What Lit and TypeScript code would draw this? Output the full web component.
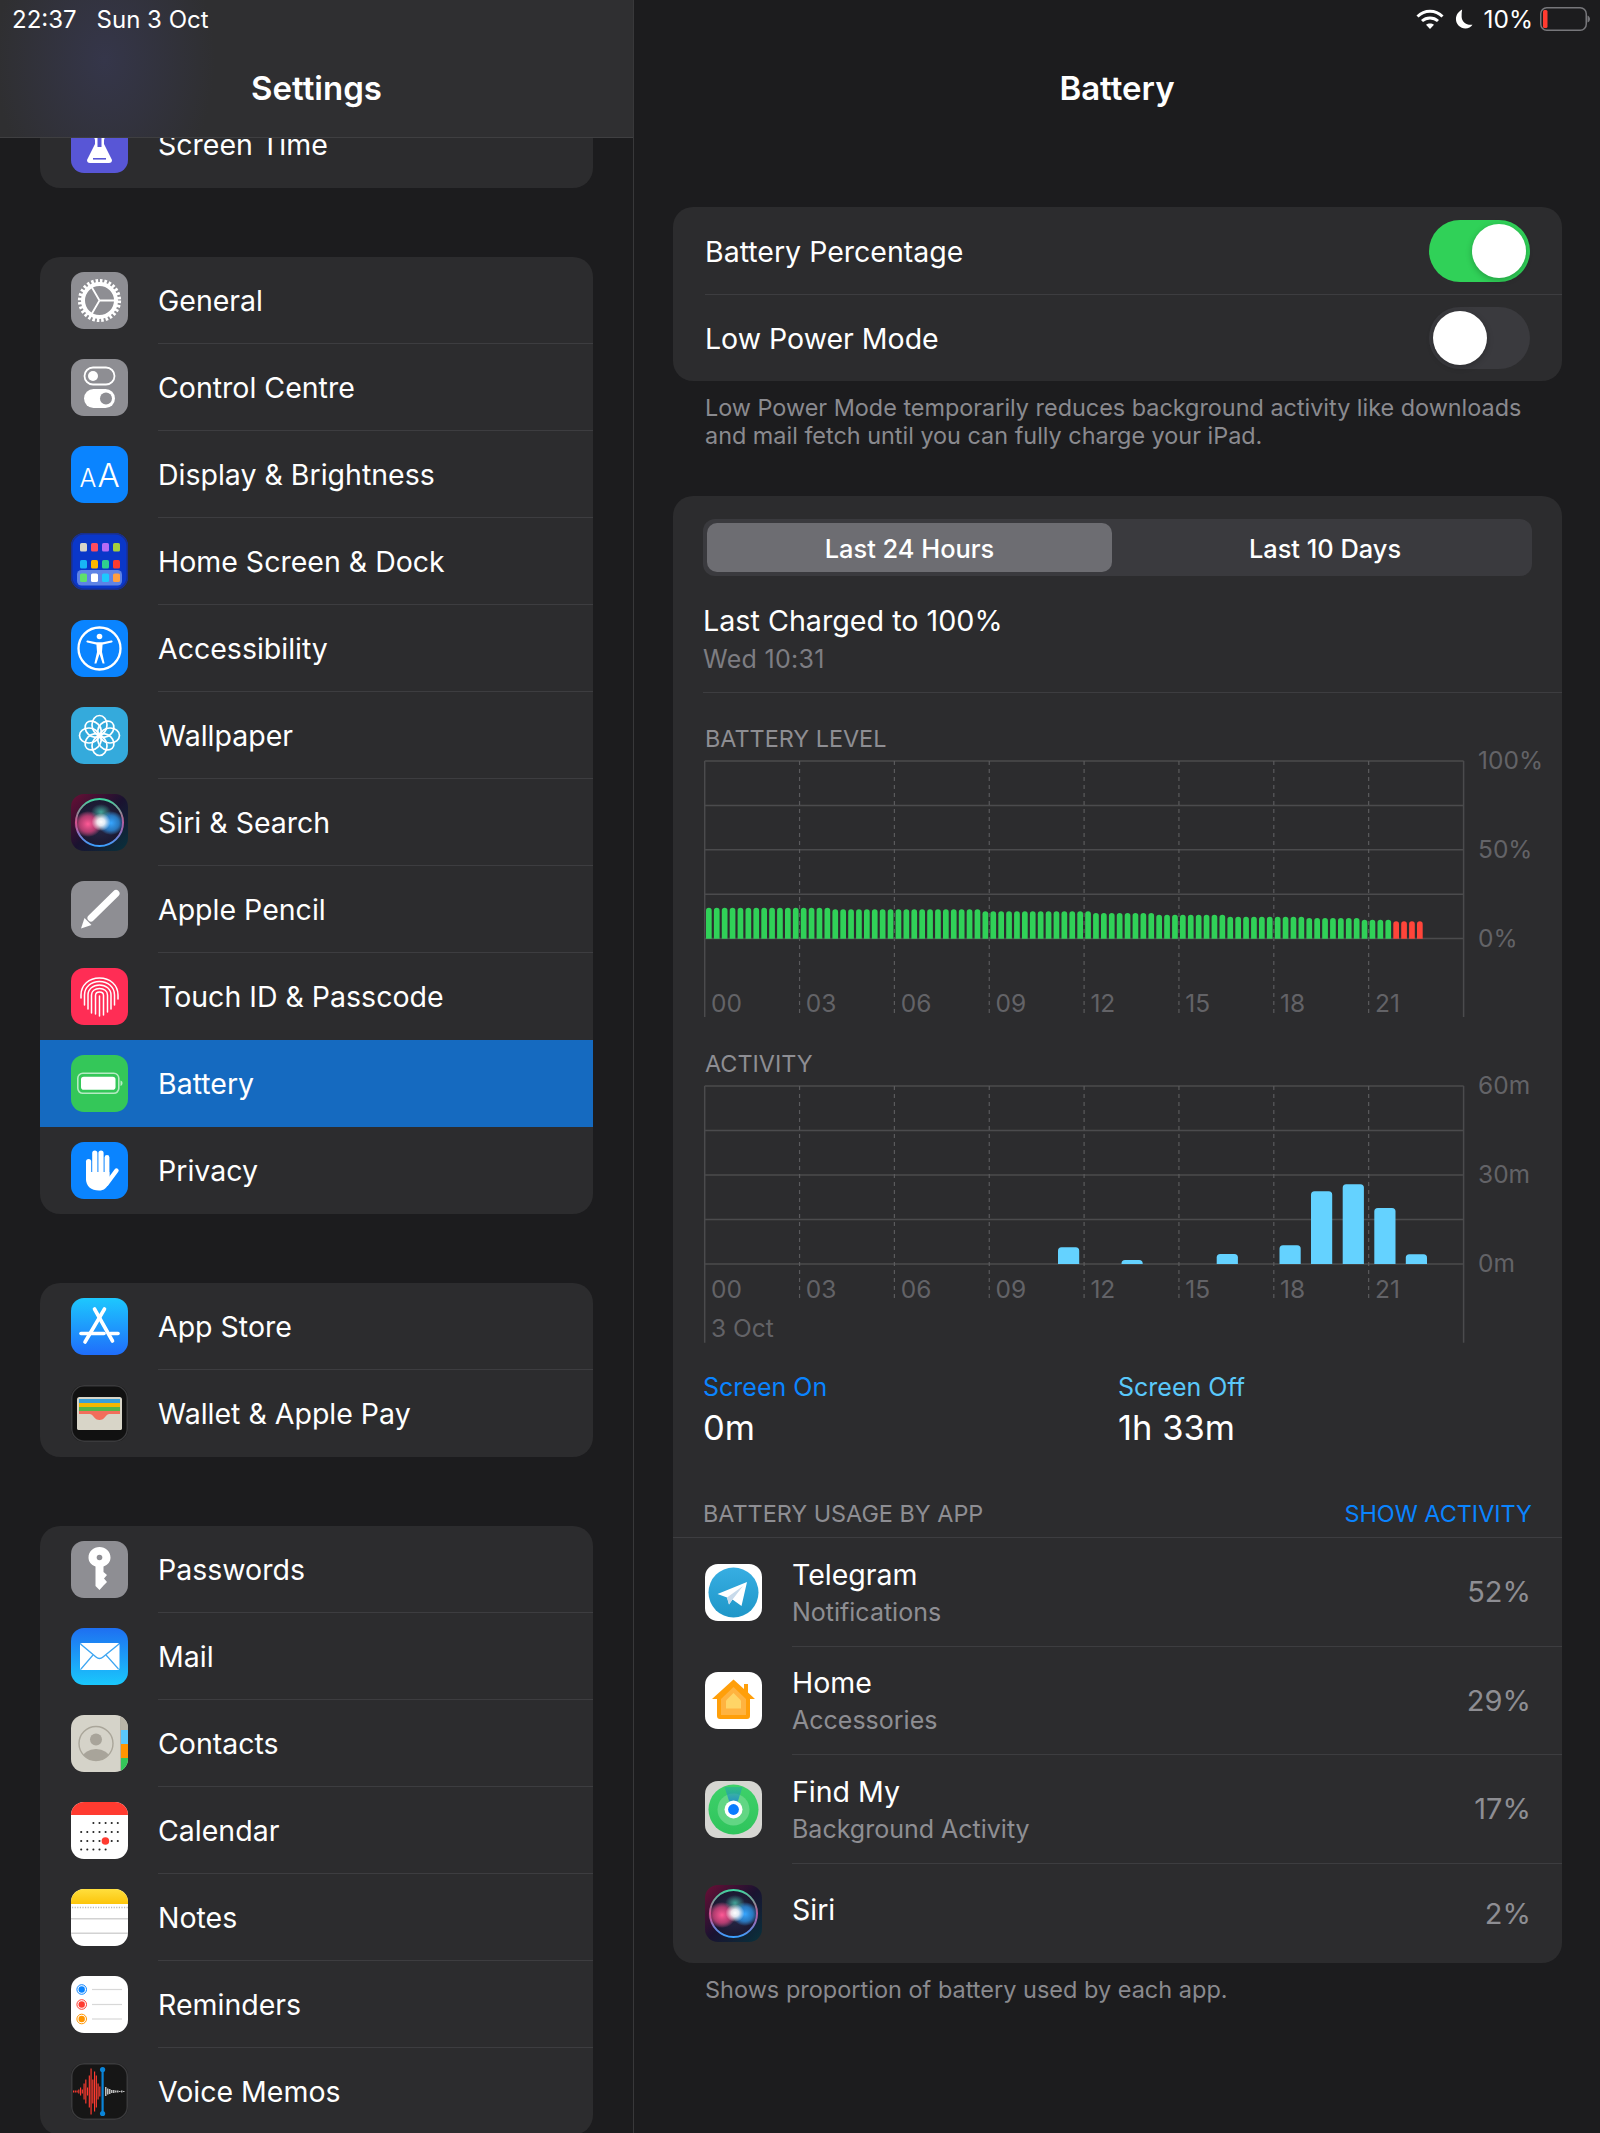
import { LitElement, html, css, svg } from "lit";
import { customElement } from "lit/decorators.js";

const defsSiri = (id: string) => svg`
  <defs>
    <linearGradient id="${id}bg" x1="0" y1="0" x2="1" y2="1">
      <stop offset="0" stop-color="#6a0f35"/><stop offset=".5" stop-color="#1a1230"/><stop offset="1" stop-color="#08323c"/>
    </linearGradient>
    <linearGradient id="${id}ring" x1="0" y1="0" x2="0" y2="1">
      <stop offset="0" stop-color="#3fd6a0"/><stop offset=".5" stop-color="#c9508f"/><stop offset="1" stop-color="#3aa0ff"/>
    </linearGradient>
    <radialGradient id="${id}p"><stop offset="0" stop-color="#ff5a96"/><stop offset=".6" stop-color="#d8447e" stop-opacity=".8"/><stop offset="1" stop-color="#ff5a96" stop-opacity="0"/></radialGradient>
    <radialGradient id="${id}b"><stop offset="0" stop-color="#37a6ff"/><stop offset=".6" stop-color="#2c8fe0" stop-opacity=".8"/><stop offset="1" stop-color="#37a6ff" stop-opacity="0"/></radialGradient>
    <radialGradient id="${id}g"><stop offset="0" stop-color="#4fdcc0" stop-opacity=".7"/><stop offset="1" stop-color="#4fdcc0" stop-opacity="0"/></radialGradient>
    <radialGradient id="${id}w"><stop offset="0" stop-color="#fff"/><stop offset=".4" stop-color="#fff" stop-opacity=".85"/><stop offset="1" stop-color="#fff" stop-opacity="0"/></radialGradient>
    <radialGradient id="${id}d"><stop offset="0" stop-color="#2a2a4a"/><stop offset="1" stop-color="#1a1830"/></radialGradient>
  </defs>`;

const siri = (id: string) => svg`
  ${defsSiri(id)}
  <rect width="57" height="57" rx="13" fill="url(#${id}bg)"/>
  <circle cx="28.5" cy="28.5" r="23.5" fill="url(#${id}d)" stroke="url(#${id}ring)" stroke-width="2"/>
  <ellipse cx="17" cy="30" rx="14" ry="13" fill="url(#${id}p)"/>
  <ellipse cx="40" cy="29" rx="13" ry="12" fill="url(#${id}b)"/>
  <ellipse cx="30" cy="18" rx="10" ry="8" fill="url(#${id}g)"/>
  <ellipse cx="30" cy="28" rx="9.5" ry="9" fill="url(#${id}w)"/>`;

const rc = (fill: string) => svg`<rect width="57" height="57" rx="13" fill="${fill}"/>`;
const border = () => svg`<rect x=".75" y=".75" width="55.5" height="55.5" rx="12.5" fill="none" stroke="#3a3a3c" stroke-width="1.5"/>`;

const ICONS: Record<string, () => unknown> = {
  screenTime: () => svg`${rc("#5856d6")}
    <path d="M20 8H37V11L33 24V28L41 44Q41 47 38 47H19Q16 47 16 44L24 28V24L20 11Z" fill="#fff"/>
    <path d="M26.5 20H30.5V31H26.5Z" fill="#5856d6"/>
    <rect x="22" y="42" width="13" height="1.6" fill="#5856d6"/>`,
  general: () => svg`${rc("#8e8e93")}
    <circle cx="28.5" cy="28.5" r="16.5" fill="none" stroke="#fff" stroke-width="4"/>
    <circle cx="28.5" cy="28.5" r="19.5" fill="none" stroke="#fff" stroke-width="4.2" stroke-dasharray="2.5 1.87"/>
    <path d="M28.5 28.5H45M28.5 28.5L20.2 14.2M28.5 28.5L20.2 42.8" stroke="#fff" stroke-width="1.8" fill="none"/>`,
  control: () => svg`${rc("#8e8e93")}
    <rect x="13.5" y="8.5" width="30" height="17" rx="8.5" fill="none" stroke="#fff" stroke-width="1.8"/>
    <circle cx="22" cy="17" r="5" fill="#fff"/>
    <rect x="13" y="30" width="31" height="19" rx="9.5" fill="#fff"/>
    <circle cx="35" cy="39.5" r="6" fill="#8e8e93"/>`,
  display: () => svg`${rc("#0a84ff")}
    <text x="17" y="41" class="aa" font-size="25" text-anchor="middle">A</text>
    <text x="37.5" y="41" class="aa" font-size="33" text-anchor="middle">A</text>`,
  home: () => {
    const rows = [
      ["#d8d5c8", "#ff4d5e", "#b56bf5", "#a5cf3c"],
      ["#18b5f5", "#ffb800", "#2fcf8f", "#ff3b30"],
    ];
    const dock = ["#5fe06a", "#fff", "#1dc8fe", "#ff9f40"];
    const xs = [9, 20, 31, 42];
    return svg`${rc("#0a37c9")}
      <rect x=".75" y=".75" width="55.5" height="55.5" rx="12.5" fill="none" stroke="#1a2f8a" stroke-width="1.5"/>
      ${rows.map((r, j) => r.map((c, i) => svg`<rect x="${xs[i]}" y="${10 + j * 17}" width="7" height="8.5" rx="1.6" fill="${c}"/>`))}
      <rect x="6" y="37" width="45" height="15.5" rx="4.5" fill="#5e83e6"/>
      ${dock.map((c, i) => svg`<rect x="${xs[i]}" y="40.5" width="7" height="8.5" rx="1.6" fill="${c}"/>`)}`;
  },
  access: () => svg`${rc("#0a84ff")}
    <circle cx="28.5" cy="28.5" r="21" fill="none" stroke="#fff" stroke-width="2.3"/>
    <circle cx="28.5" cy="16.5" r="2.8" fill="#fff"/>
    <path d="M16.5 21.5L25 23.3H32L40.5 21.5" stroke="#fff" stroke-width="2.2" stroke-linecap="round" fill="none"/>
    <path d="M25.3 23H31.7L31 32L33.6 43.5H31.6L28.5 34L25.4 43.5H23.4L26 32Z" fill="#fff"/>`,
  wallpaper: () => svg`${rc("#34aadc")}
    ${[0, 45, 90, 135, 180, 225, 270, 315].map(
      (a) => svg`<ellipse cx="28.5" cy="${a % 90 === 0 ? 18 : 19.5}" rx="${a % 90 === 0 ? 7.5 : 7}" ry="${a % 90 === 0 ? 9.5 : 9}" transform="rotate(${a} 28.5 28.5)" fill="none" stroke="#fff" stroke-width="1.7"/>`
    )}
    <circle cx="28.5" cy="28.5" r="3" fill="#fff"/>`,
  siri: () => siri("s1"),
  pencil: () => svg`${rc("#8e8e93")}
    <path d="M45 12.5L20 37" stroke="#fff" stroke-width="7" stroke-linecap="round" fill="none"/>
    <path d="M10 47.5L13.5 37L20.5 44Z" fill="#fff"/>`,
  touch: () => svg`${rc("#ff2d55")}
    <g fill="none" stroke="#fff" stroke-width="1.5" stroke-linecap="round">
      <path d="M10 30V27C10 17 18 10 28.5 10C39 10 47 17 47 27V31"/>
      <path d="M13.5 37V27C13.5 19 20 13.5 28.5 13.5C37 13.5 43.5 19 43.5 27V37"/>
      <path d="M17 41V27C17 21 22 17 28.5 17C35 17 40 21 40 27V41"/>
      <path d="M20.5 45V27C20.5 23 24 20.5 28.5 20.5C33 20.5 36.5 23 36.5 27V44"/>
      <path d="M24.5 46V27.5C24.5 25 26 24 28.5 24C31 24 32.5 25 32.5 27.5V47"/>
      <path d="M28.5 28V48"/>
    </g>`,
  battery: () => svg`${rc("#34c759")}
    <rect x="6.8" y="18.3" width="41" height="20" rx="5" fill="none" stroke="#b5eac3" stroke-width="1.6"/>
    <rect x="10" y="21.7" width="34.5" height="13" rx="2.8" fill="#fff"/>
    <path d="M49.5 25.5C51 26 51.5 27 51.5 28.2C51.5 29.4 51 30.4 49.5 31Z" fill="#b5eac3"/>`,
  privacy: () => svg`${rc("#0a84ff")}
    <g fill="#fff">
      <rect x="15" y="17" width="5.2" height="22" rx="2.6"/>
      <rect x="21.2" y="8.5" width="5.2" height="26" rx="2.6"/>
      <rect x="27.4" y="8.5" width="5.2" height="26" rx="2.6"/>
      <rect x="33.6" y="13" width="4.8" height="24" rx="2.4"/>
      <path d="M15 30H38.4V40C36 46 33 48.5 28 48.5C20 48.5 15 44 15 37Z"/>
    </g>
    <path d="M35.5 42L45.5 28.5" stroke="#fff" stroke-width="4.4" stroke-linecap="round"/>`,
  appstore: () => svg`
    <defs><linearGradient id="as" x1="0" y1="0" x2="0" y2="1"><stop offset="0" stop-color="#1dc8fe"/><stop offset="1" stop-color="#1f6dfb"/></linearGradient></defs>
    ${rc("url(#as)")}
    <g stroke="#fff" stroke-width="3.6" stroke-linecap="round" fill="none">
      <path d="M23.5 11L41.5 43"/><path d="M33.5 11L14 44"/>
      <path d="M10 35.5H33"/><path d="M39.5 35.5H47"/>
    </g>`,
  wallet: () => svg`${rc("#111")}${border()}
    <rect x="6" y="12" width="45" height="33" rx="2.5" fill="#d8d5c8"/>
    <rect x="8" y="14" width="41" height="4" fill="#3a9fd8"/>
    <rect x="8" y="18" width="41" height="4" fill="#f5b700"/>
    <rect x="8" y="22" width="41" height="4" fill="#56b548"/>
    <rect x="8" y="26" width="41" height="9" fill="#f26d5b"/>
    <path d="M6 29H19Q21 29 22.5 31.5Q25 35 28.5 35Q32 35 34.5 31.5Q36 29 38 29H51V43Q51 45 49 45H8Q6 45 6 43Z" fill="#d8d5c8"/>`,
  passwords: () => svg`${rc("#8e8e93")}
    <path d="M24.5 25.5C20 24 17.5 20.5 17.5 16.5C17.5 10.5 22.5 6 28.5 6C34.5 6 39.5 10.5 39.5 16.5C39.5 20.5 37 24 32.5 25.5V31L36 34L33 37.5L36 41L33 44L28.5 49L24.5 45Z" fill="#fff"/>
    <circle cx="28.5" cy="16.5" r="2.8" fill="#8e8e93"/>`,
  mail: () => svg`
    <defs><linearGradient id="ml" x1="0" y1="0" x2="0" y2="1"><stop offset="0" stop-color="#1e6ff1"/><stop offset="1" stop-color="#1ac8fc"/></linearGradient></defs>
    ${rc("url(#ml)")}
    <rect x="9" y="15" width="39.5" height="27" rx="2" fill="#fff"/>
    <path d="M9.5 16L25 29Q28.5 32 32 29L48 16" fill="none" stroke="#3ea6f2" stroke-width="1.4"/>
    <path d="M10 41L22 27M47.5 41L35 27" fill="none" stroke="#3ea6f2" stroke-width="1.2"/>`,
  contacts: () => svg`
    <defs><clipPath id="ct"><rect width="57" height="57" rx="13"/></clipPath><clipPath id="cc"><circle cx="25" cy="28.5" r="17"/></clipPath></defs>
    <g clip-path="url(#ct)">
      <rect width="57" height="57" fill="#d5d3c9"/>
      <rect x="50" y="0" width="7" height="15" fill="#b9b5a8"/>
      <rect x="50" y="15" width="7" height="14" fill="#5ac8fa"/>
      <rect x="50" y="29" width="7" height="14" fill="#ff9500"/>
      <rect x="50" y="43" width="7" height="14" fill="#34c759"/>
      <rect x="49" y="0" width="1" height="57" fill="#b5b2a6"/>
    </g>
    <circle cx="25" cy="28.5" r="17" fill="#d5d3c9" stroke="#aaa69a" stroke-width="1.4"/>
    <g clip-path="url(#cc)" fill="#a8a49a"><circle cx="25" cy="24.5" r="6"/><ellipse cx="25" cy="43" rx="13.5" ry="9"/></g>`,
  calendar: () => {
    const xs = [10.2, 16.3, 22.4, 28.5, 34.6, 40.7, 46.8];
    const grid: [number, number[]][] = [
      [21, [2, 3, 4, 5, 6]],
      [30, [0, 1, 2, 3, 4, 5, 6]],
      [39, [0, 1, 2, 3, 5, 6]],
      [47.5, [0, 1, 2, 3, 4]],
    ];
    return svg`
      <defs><clipPath id="cal"><rect width="57" height="57" rx="13"/></clipPath></defs>
      <g clip-path="url(#cal)"><rect width="57" height="57" fill="#fff"/><rect width="57" height="13" fill="#ff3b30"/></g>
      ${grid.map(([y, cols]) => cols.map((c) => svg`<circle cx="${xs[c]}" cy="${y}" r="1.05" fill="#222"/>`))}
      <circle cx="34.4" cy="39" r="3.8" fill="#ff3b30"/>`;
  },
  notes: () => svg`
    <defs><clipPath id="nt"><rect width="57" height="57" rx="13"/></clipPath>
    <linearGradient id="ny" x1="0" y1="0" x2="0" y2="1"><stop offset="0" stop-color="#ffdf3e"/><stop offset="1" stop-color="#fcc50a"/></linearGradient></defs>
    <g clip-path="url(#nt)"><rect width="57" height="57" fill="#fff"/><rect width="57" height="15" fill="url(#ny)"/>
    <path d="M1 18.5H57" stroke="#bbb" stroke-width="1.4" stroke-dasharray="1.2 1.4"/>
    <rect y="29" width="57" height="1.5" fill="#d2d2d2"/><rect y="43.5" width="57" height="1.5" fill="#d2d2d2"/></g>`,
  reminders: () => svg`${rc("#fff")}
    ${[
      [13.5, "#0a84ff"],
      [28.5, "#ff3b30"],
      [43, "#ff9500"],
    ].map(
      ([y, c]) => svg`<circle cx="10.7" cy="${y}" r="4.8" fill="none" stroke="${c}" stroke-width="1" /><circle cx="10.7" cy="${y}" r="3.2" fill="${c}"/>
      <rect x="21" y="${(y as number) - 0.6}" width="30" height="1.2" fill="#d8d8d8"/>`
    )}`,
  voice: () => {
    const red = [1, 1, 1, 2, 4, 2, 8, 12, 4, 16, 23, 12, 20, 16, 8, 5];
    const white = [9, 6, 5, 3, 3, 2, 2, 1, 2, 1];
    return svg`${rc("#161616")}${border()}
      ${red.map((h, i) => svg`<rect x="${2 + i * 1.75}" y="${28.5 - h}" width="1.15" height="${h * 2}" fill="#ff3b30"/>`)}
      ${white.map((h, i) => svg`<rect x="${34.2 + i * 2}" y="${28.5 - h / 2}" width="1.2" height="${h}" fill="#e8e8e8"/>`)}
      <rect x="30.5" y="6" width="2.2" height="45" fill="#0a84d8"/>
      <circle cx="31.6" cy="6.5" r="2.6" fill="#0a84d8"/><circle cx="31.6" cy="50.5" r="2.6" fill="#0a84d8"/>`;
  },
  telegram: () => svg`
    <defs><linearGradient id="tg" x1="0" y1="0" x2="0" y2="1"><stop offset="0" stop-color="#37aee2"/><stop offset="1" stop-color="#1e96c8"/></linearGradient></defs>
    ${rc("#fff")}
    <circle cx="28.5" cy="28.5" r="25" fill="url(#tg)"/>
    <path d="M12.5 30L42 18L36.5 42L27.5 35.5L24 40.5L22 33.5Z" fill="#fff"/>
    <path d="M22 33.5L38 22L27.5 35.5L24 40.5Z" fill="#c8daea"/>`,
  homeApp: () => svg`${rc("#fff")}
    <path d="M28.5 7.5L39 17V12H43V20.5L50 27H45V44Q45 47 42 47H15Q12 47 12 44V27H7Z" fill="#ff9f0a"/>
    <path d="M28.5 15L41 27V43H16V27Z" fill="#ffb340"/>
    <path d="M28.5 21L36 28.5V36.5H21V28.5Z" fill="#ffd466"/>`,
  findmy: () => svg`
    <defs><linearGradient id="fm" x1="0" y1="0" x2="0" y2="1"><stop offset="0" stop-color="#3ed16a"/><stop offset="1" stop-color="#2fc45c"/></linearGradient>
    <linearGradient id="fb" x1="0" y1="0" x2="0" y2="1"><stop offset="0" stop-color="#1f9fb0" stop-opacity=".4"/><stop offset="1" stop-color="#1a7fd8"/></linearGradient></defs>
    ${rc("#d6d6d2")}
    <circle cx="28.5" cy="28.5" r="25" fill="url(#fm)"/>
    <circle cx="28.5" cy="28.5" r="16" fill="#62d684"/>
    <path d="M19.5 6L37.5 6L31 26H26Z" fill="url(#fb)"/>
    <circle cx="28.5" cy="28.5" r="9" fill="#fff"/>
    <circle cx="28.5" cy="28.5" r="5.4" fill="#0a7cff"/>`,
  siri2: () => siri("s2"),
};

const icon = (n: string) => html`<svg class="icon" viewBox="0 0 57 57" width="57" height="57">${ICONS[n]()}</svg>`;

const GROUPS: [string, string][][] = [
  [["screenTime", "Screen Time"]],
  [
    ["general", "General"],
    ["control", "Control Centre"],
    ["display", "Display & Brightness"],
    ["home", "Home Screen & Dock"],
    ["access", "Accessibility"],
    ["wallpaper", "Wallpaper"],
    ["siri", "Siri & Search"],
    ["pencil", "Apple Pencil"],
    ["touch", "Touch ID & Passcode"],
    ["battery", "Battery"],
    ["privacy", "Privacy"],
  ],
  [
    ["appstore", "App Store"],
    ["wallet", "Wallet & Apple Pay"],
  ],
  [
    ["passwords", "Passwords"],
    ["mail", "Mail"],
    ["contacts", "Contacts"],
    ["calendar", "Calendar"],
    ["notes", "Notes"],
    ["reminders", "Reminders"],
    ["voice", "Voice Memos"],
  ],
];

const APPS = [
  { i: "telegram", n: "Telegram", s: "Notifications", p: "52%" },
  { i: "homeApp", n: "Home", s: "Accessories", p: "29%" },
  { i: "findmy", n: "Find My", s: "Background Activity", p: "17%" },
  { i: "siri2", n: "Siri", s: "", p: "2%" },
];

const L = 31.7;
const R = 790.6;
const STEP = 94.85;
const HOURS = ["00", "03", "06", "09", "12", "15", "18", "21"];

const topBar = (x: number, base: number, w: number, h: number, r: number, fill: string) =>
  svg`<path d="M${x} ${base}V${base - h + r}A${r} ${r} 0 0 1 ${x + r} ${base - h}H${x + w - r}A${r} ${r} 0 0 1 ${x + w} ${base - h + r}V${base}Z" fill="${fill}"/>`;

const levelHeight = (i: number) => {
  const steps: [number, number][] = [
    [16, 31],
    [35, 29.5],
    [49, 27.5],
    [57, 25.7],
    [66, 24],
    [76, 22],
    [83, 20.7],
    [87, 19],
    [91, 17.5],
  ];
  return steps.find(([end]) => i < end)![1];
};

const grid = (gap: number, solidEnd: number, dashEnd: number, labelY: number, yLabels: string[]) => svg`
  ${[0, 1, 2, 3, 4].map((i) => svg`<line class="ln" x1="${L}" x2="${R}" y1="${8 + i * gap}" y2="${8 + i * gap}"/>`)}
  <line class="ln" x1="${L}" x2="${L}" y1="8" y2="${solidEnd}"/>
  <line class="ln" x1="${R}" x2="${R}" y1="8" y2="${solidEnd}"/>
  ${[1, 2, 3, 4, 5, 6, 7].map((i) => svg`<line class="dash" x1="${L + i * STEP}" x2="${L + i * STEP}" y1="8" y2="${dashEnd}"/>`)}
  ${HOURS.map((h, i) => svg`<text class="lab" x="${38 + i * STEP}" y="${labelY}">${h}</text>`)}
  ${yLabels.map((t, i) => svg`<text class="lab" x="805" y="${7 + i * 2 * gap}">${t}</text>`)}
`;

const ACT: [number, number][] = [
  [385, 16.7],
  [448.5, 4],
  [543.7, 10],
  [606.5, 18.7],
  [638, 72.7],
  [669.7, 79.7],
  [701.3, 56],
  [732.8, 9.7],
];

@customElement("app-root")
export class AppRoot extends LitElement {
  static styles = css`
    :host {
      display: flex;
      width: 1600px;
      height: 2133px;
      overflow: hidden;
      background: #1c1c1e;
      color: #fff;
      font-family: Inter, "Noto Sans", sans-serif;
    }
    .side {
      position: relative;
      width: 634px;
      height: 2133px;
      flex: none;
      overflow: hidden;
      padding-top: 101px;
      box-sizing: border-box;
      border-right: 1px solid #38383a;
    }
    .side-head {
      position: absolute;
      left: 0;
      top: 0;
      right: 0;
      height: 138px;
      box-sizing: border-box;
      border-bottom: 1px solid #3f3f41;
      background: radial-gradient(ellipse 110px 150px at 105px 60px, #35364a 0%, rgba(53, 54, 74, 0) 100%), #2f2f31;
      z-index: 2;
    }
    .clock {
      height: 38px;
      padding-left: 12px;
      font-size: 24px;
      line-height: 40px;
      display: flex;
      gap: 20px;
    }
    .title {
      font-size: 33px;
      font-weight: 600;
      text-align: center;
      line-height: 101px;
      height: 100px;
    }
    .group {
      margin: 0 40px 69px;
      width: 553px;
      background: #2c2c2e;
      border-radius: 20px;
      overflow: hidden;
    }
    .row {
      height: 87px;
      display: flex;
      align-items: center;
      padding-left: 31px;
      box-sizing: border-box;
      position: relative;
      font-size: 28.5px;
    }
    .row .label {
      margin-left: 30px;
      flex: 1;
      height: 87px;
      line-height: 87px;
      box-shadow: 0 -1px 0 #3d3d40;
    }
    .row:first-child .label,
    .row.sel .label,
    .row.sel + .row .label {
      box-shadow: none;
    }
    .row.sel {
      background: #156ac0;
    }
    .icon {
      flex: none;
      display: block;
    }
    .aa {
      fill: #fff;
      font-family: Inter, sans-serif;
      font-weight: 300;
    }
    .main {
      flex: 1;
      min-width: 0;
    }
    .status {
      height: 38px;
      display: flex;
      justify-content: flex-end;
      align-items: center;
      padding-right: 10px;
    }
    .moon {
      margin-left: 11px;
    }
    .pct-top {
      font-size: 24.5px;
      margin: 0 7px 0 11px;
    }
    .card {
      margin: 0 38px 0 39px;
      background: #2c2c2e;
      border-radius: 20px;
      overflow: hidden;
    }
    .first {
      margin-top: 69px;
    }
    .setting {
      height: 87px;
      display: flex;
      align-items: center;
      padding: 0 32px;
      font-size: 28.5px;
      position: relative;
      box-sizing: border-box;
    }
    .setting + .setting {
      border-top: 1px solid #3d3d40;
      margin-left: 32px;
      padding-left: 0;
    }
    .setting span {
      flex: 1;
      padding-top: 1px;
    }
    .toggle {
      width: 101px;
      height: 62px;
      border-radius: 31px;
      background: #3a3a3e;
      position: relative;
      flex: none;
    }
    .toggle.on {
      background: #30d158;
    }
    .knob {
      position: absolute;
      top: 4px;
      left: 4px;
      width: 54px;
      height: 54px;
      border-radius: 50%;
      background: #fff;
      box-shadow: 0 2px 6px rgba(0, 0, 0, 0.25);
    }
    .toggle.on .knob {
      left: 43px;
    }
    .cap {
      margin: 13px 0 46px 71px;
      font-size: 23.4px;
      line-height: 28px;
      color: #8a8a8f;
    }
    .seg {
      margin: 23px 30px 0;
      height: 57px;
      box-sizing: border-box;
      padding: 4px;
      border-radius: 12px;
      background: #3a3a3e;
      display: flex;
      font-size: 25.4px;
      font-weight: 500;
      line-height: 51px;
      text-align: center;
    }
    .seg div {
      flex: 1;
      padding-left: 10px;
    }
    .seg .on {
      flex: none;
      width: 405px;
      box-sizing: border-box;
      padding-left: 0;
      height: 49px;
      background: #6d6d72;
      border-radius: 10px;
    }
    .charged {
      margin: 27px 0 0 30px;
      font-size: 28.7px;
      line-height: 36px;
    }
    .when {
      margin: 5px 0 18px 30px;
      font-size: 25px;
      line-height: 30px;
      color: #7d7d82;
      letter-spacing: 0.3px;
    }
    .hr {
      margin-left: 30px;
      height: 1px;
      background: #3d3d40;
    }
    .cap-label {
      margin-left: 32px;
      font-size: 23.4px;
      line-height: 28px;
      height: 20px;
      color: #8e8e93;
    }
    .mt32 {
      margin-top: 32px;
    }
    .mt28 {
      margin-top: 28px;
    }
    .chart {
      display: block;
    }
    .ln {
      stroke: #4b4b4d;
      stroke-width: 1.5;
    }
    .dash {
      stroke: #5a5a5c;
      stroke-width: 1.2;
      stroke-dasharray: 4 4;
    }
    .lab {
      fill: #636367;
      font-size: 24.5px;
      dominant-baseline: central;
      font-family: Inter, sans-serif;
    }
    .stats {
      margin: 24px 30px 0;
      display: grid;
      grid-template-columns: 415px 1fr;
    }
    .stats .k {
      font-size: 25px;
      line-height: 30px;
    }
    .k.blue {
      color: #0a84ff;
    }
    .k.cyan {
      color: #5ac8fa;
    }
    .stats .v {
      margin-top: 6px;
      font-size: 34.5px;
      line-height: 40px;
    }
    .usage {
      margin: 51px 0 0;
      padding: 0 30px 8px;
      display: flex;
      justify-content: space-between;
      font-size: 23.4px;
      line-height: 30px;
      color: #8e8e93;
      border-bottom: 1px solid #3d3d40;
    }
    .usage b {
      font-weight: 400;
      color: #0a84ff;
    }
    .app {
      height: 108.5px;
      display: flex;
      align-items: center;
      padding-left: 32px;
      box-sizing: border-box;
    }
    .app:last-child {
      height: 99px;
    }
    .app-body {
      margin-left: 30px;
      flex: 1;
      align-self: stretch;
      display: flex;
      align-items: center;
      padding-right: 31px;
      border-bottom: 1px solid #3d3d40;
    }
    .app:last-child .app-body {
      border-bottom: none;
    }
    .app-text {
      flex: 1;
    }
    .app:last-child .app-text {
      padding-bottom: 6px;
    }
    .app-name {
      font-size: 28.5px;
      line-height: 36px;
    }
    .app-sub {
      margin-top: 4px;
      font-size: 25px;
      line-height: 30px;
      color: #8e8e93;
    }
    .app-pct {
      font-size: 29px;
      color: #8e8e93;
    }
    .foot {
      margin: 13px 0 0 71px;
      font-size: 23.5px;
      line-height: 28px;
      color: #8a8a8f;
    }
  `;

  private renderSide() {
    return html`<div class="side">
      <div class="side-head">
        <div class="clock"><span>22:37</span><span>Sun 3 Oct</span></div>
        <div class="title">Settings</div>
      </div>
      ${GROUPS.map(
        (g) => html`<div class="group">
          ${g.map(
            ([i, t]) => html`<div class="row ${t === "Battery" ? "sel" : ""}">${icon(i)}<div class="label">${t}</div></div>`
          )}
        </div>`
      )}
    </div>`;
  }

  private renderStatus() {
    return html`<div class="status">
      <svg width="28" height="20" viewBox="0 0 28 20" fill="none" stroke="#fff" stroke-width="3">
        <path d="M1.5 7.5C8.5 .5 19.5 .5 26.5 7.5"/>
        <path d="M6 12C10.5 8 17.5 8 22 12"/>
        <path d="M14 20L10 15.8C12.2 14 15.8 14 18 15.8Z" fill="#fff" stroke="none"/>
      </svg>
      <svg class="moon" width="18" height="20" viewBox="0 0 19 20">
        <path d="M7.5 0C4 2 1 5.5 1 10C1 15.5 5.5 20 11 20C14 20 17 18.5 18.5 16C12 17 7 12.5 7 7.5C7 5 7 2.5 7.5 0Z" fill="#fff"/>
      </svg>
      <span class="pct-top">10%</span>
      <svg width="50" height="24" viewBox="0 0 50 24">
        <rect x=".75" y=".75" width="45.5" height="22.5" rx="6" fill="none" stroke="#77777b" stroke-width="1.5"/>
        <rect x="3" y="3" width="4.5" height="18" rx="1.5" fill="#ff3b30"/>
        <path d="M47.5 8.5C49 9 50 10.5 50 12C50 13.5 49 15 47.5 15.5Z" fill="#77777b"/>
      </svg>
    </div>`;
  }

  private renderLevel() {
    return html`<svg class="chart" width="889" height="277" viewBox="0 -8 889 277">
      ${grid(44.4, 264, 261, 250, ["100%", "50%", "0%"])}
      ${Array.from({ length: 91 }, (_, i) =>
        topBar(33 + i * 7.9, 185.8, 5.7, levelHeight(i), 2.85, i >= 87 ? "#ff453a" : "#30d158")
      )}
    </svg>`;
  }

  private renderActivity() {
    return html`<svg class="chart" width="889" height="278" viewBox="0 -8 889 278">
      ${grid(44.5, 264.7, 222, 211, ["60m", "30m", "0m"])}
      <text class="lab" x="38" y="250">3 Oct</text>
      ${ACT.map(([x, h]) => topBar(x, 186, 21.2, h, 3.5, "#64d2ff"))}
    </svg>`;
  }

  private renderMain() {
    return html`<div class="main">
      ${this.renderStatus()}
      <div class="title">Battery</div>
      <div class="card first">
        <div class="setting"><span>Battery Percentage</span><div class="toggle on"><div class="knob"></div></div></div>
        <div class="setting"><span>Low Power Mode</span><div class="toggle"><div class="knob"></div></div></div>
      </div>
      <div class="cap">
        Low Power Mode temporarily reduces background activity like downloads<br />and mail fetch until you can fully charge your iPad.
      </div>
      <div class="card">
        <div class="seg"><div class="on">Last 24 Hours</div><div>Last 10 Days</div></div>
        <div class="charged">Last Charged to 100%</div>
        <div class="when">Wed 10:31</div>
        <div class="hr"></div>
        <div class="cap-label mt32">BATTERY LEVEL</div>
        ${this.renderLevel()}
        <div class="cap-label mt28">ACTIVITY</div>
        ${this.renderActivity()}
        <div class="stats">
          <div><div class="k blue">Screen On</div><div class="v">0m</div></div>
          <div><div class="k cyan">Screen Off</div><div class="v">1h 33m</div></div>
        </div>
        <div class="usage"><span>BATTERY USAGE BY APP</span><b>SHOW ACTIVITY</b></div>
        ${APPS.map(
          (a) => html`<div class="app">
            ${icon(a.i)}
            <div class="app-body">
              <div class="app-text">
                <div class="app-name">${a.n}</div>
                ${a.s ? html`<div class="app-sub">${a.s}</div>` : ""}
              </div>
              <div class="app-pct">${a.p}</div>
            </div>
          </div>`
        )}
      </div>
      <div class="foot">Shows proportion of battery used by each app.</div>
    </div>`;
  }

  render() {
    return html`${this.renderSide()}${this.renderMain()}`;
  }
}
